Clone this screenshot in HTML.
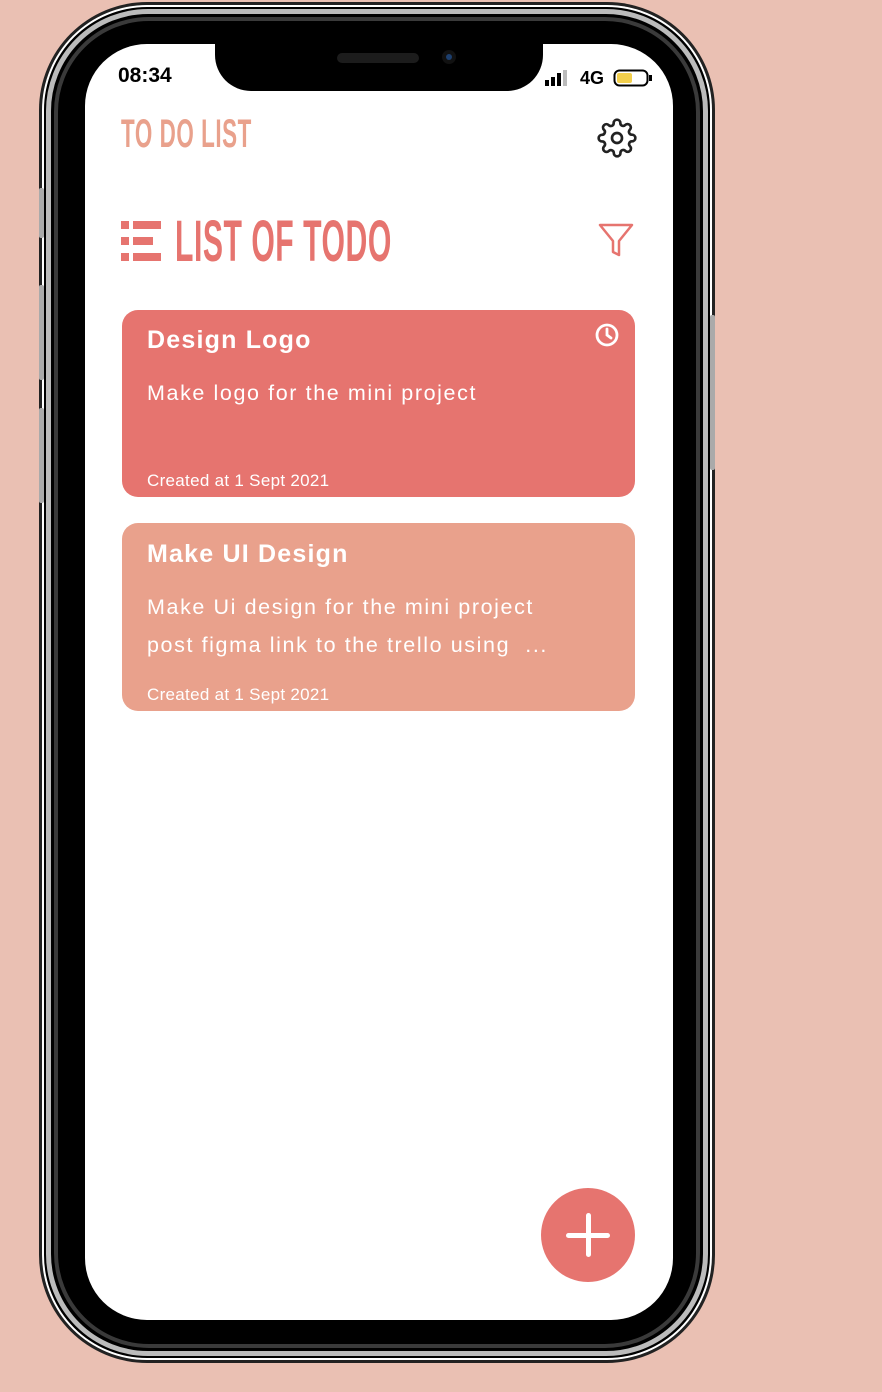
<!DOCTYPE html>
<html><head><meta charset="utf-8"><style>
body{margin:0;width:882px;height:1392px;background:#eac0b3;position:relative;overflow:hidden;font-family:"Liberation Sans",sans-serif}
.abs{position:absolute}
.phone{left:42px;top:5px;width:670px;height:1355px;border-radius:105px;background:#000;box-shadow:0 0 0 2px #fff inset,0 0 0 3px #222;}
.ring{left:46px;top:9px;width:662px;height:1347px;border-radius:102px;border:5px solid #bbb;box-sizing:border-box}
.ring2{left:54px;top:17px;width:646px;height:1331px;border-radius:95px;border:4px solid #3a3a3a;box-sizing:border-box}
.screen{left:85px;top:44px;width:588px;height:1276px;border-radius:62px;background:#fff;overflow:hidden}
.notch{left:215px;top:40px;width:328px;height:51px;background:#000;border-radius:0 0 36px 36px}
.narrow{font-family:"Liberation Sans Narrow","Liberation Sans",sans-serif;font-weight:bold;transform-origin:left top;white-space:nowrap}
.card{left:122px;width:513px;border-radius:16px;color:#fff}
.t{position:absolute;left:25px;font-weight:bold;font-size:25px;letter-spacing:1.2px}
.b{position:absolute;left:25px;font-size:21.5px;letter-spacing:1.6px;white-space:nowrap}
.c{position:absolute;left:25px;font-size:17px;letter-spacing:.3px}
</style></head><body>
<div class="abs phone"></div>
<div class="abs ring"></div>
<div class="abs ring2"></div>
<div class="abs" style="left:39px;top:188px;width:5px;height:50px;background:#aaa;border-radius:2px"></div>
<div class="abs" style="left:39px;top:285px;width:5px;height:95px;background:#aaa;border-radius:2px"></div>
<div class="abs" style="left:39px;top:408px;width:5px;height:95px;background:#aaa;border-radius:2px"></div>
<div class="abs" style="left:710px;top:315px;width:5px;height:155px;background:#aaa;border-radius:2px"></div>
<div class="abs screen"></div>
<div class="abs notch"></div>
<div class="abs" style="left:337px;top:53px;width:82px;height:10px;background:#1c1c1c;border-radius:5px"></div>
<div class="abs" style="left:442px;top:50px;width:14px;height:14px;background:#111;border-radius:50%"><div style="margin:4px;width:6px;height:6px;border-radius:50%;background:#1d3f6e"></div></div>
<div class="abs" style="left:118px;top:64px;font-size:21px;font-weight:bold;color:#000">08:34</div>
<svg class="abs" style="left:545px;top:70px" width="28" height="17"><rect x="0" y="10" width="4" height="6" fill="#000"/><rect x="6" y="7" width="4" height="9" fill="#000"/><rect x="12" y="3" width="4" height="13" fill="#000"/><rect x="18" y="0" width="4" height="16" fill="#bbb"/></svg>
<div class="abs" style="left:580px;top:68px;font-size:18px;font-weight:bold">4G</div>
<svg class="abs" style="left:613px;top:68px" width="42" height="20"><rect x="1.5" y="2.5" width="33" height="15" rx="5" fill="none" stroke="#000" stroke-width="2"/><rect x="4" y="5" width="15" height="10" rx="2" fill="#f2cf4c"/><rect x="36" y="7" width="3" height="6" fill="#000"/></svg>
<div class="abs narrow" style="left:121px;top:112px;font-size:40px;color:#e9a18c;transform:scaleX(.56);letter-spacing:1px">TO DO LIST</div>
<svg class="abs" style="left:597px;top:118px" width="40" height="40" viewBox="0 0 24 24" fill="none" stroke="#222" stroke-width="1.6" stroke-linejoin="round"><circle cx="12" cy="12" r="3"/><path d="M19.4 15a1.65 1.65 0 0 0 .33 1.82l.06.06a2 2 0 1 1-2.83 2.830l-.06-.06a1.650 1.650 0 0 0-1.82-.33 1.65 1.65 0 0 0-1 1.51V21a2 2 0 1 1-4 0v-.09A1.65 1.65 0 0 0 9 19.4a1.65 1.65 0 0 0-1.82.33l-.06.06a2 2 0 1 1-2.83-2.83l.06-.06a1.65 1.65 0 0 0 .33-1.82 1.65 1.65 0 0 0-1.51-1H3a2 2 0 1 1 0-4h.09A1.65 1.65 0 0 0 4.6 9a1.65 1.65 0 0 0-.33-1.82l-.06-.06a2 2 0 1 1 2.83-2.83l.06.06a1.65 1.65 0 0 0 1.82.33H9a1.65 1.65 0 0 0 1-1.51V3a2 2 0 1 1 4 0v.09a1.65 1.65 0 0 0 1 1.51 1.65 1.65 0 0 0 1.82-.33l.06-.06a2 2 0 1 1 2.83 2.83l-.06.06a1.65 1.65 0 0 0-.33 1.82V9a1.65 1.65 0 0 0 1.510 1H21a2 2 0 1 1 0 4h-.09a1.65 1.65 0 0 0-1.51 1z"/></svg>
<svg class="abs" style="left:121px;top:221px" width="40" height="40"><g fill="#e6746f"><rect x="0" y="0" width="8" height="8"/><rect x="12" y="0" width="28" height="8"/><rect x="0" y="16" width="8" height="8"/><rect x="12" y="16" width="20" height="8"/><rect x="0" y="32" width="8" height="8"/><rect x="12" y="32" width="28" height="8"/></g></svg>
<div class="abs narrow" style="left:175px;top:208px;font-size:58px;color:#e6746f;transform:scaleX(.52);letter-spacing:1px">LIST OF TODO</div>
<svg class="abs" style="left:597px;top:222px" width="38" height="36" viewBox="0 0 38 36"><path d="M3 3H35L22 19V33L16 30V19Z" fill="none" stroke="#e6746f" stroke-width="2.5" stroke-linejoin="round"/></svg>
<div class="abs card" style="top:310px;height:187px;background:#e6746f">
<div class="t" style="top:16px">Design Logo</div>
<svg style="position:absolute;left:473px;top:13px" width="24" height="24"><circle cx="12" cy="12" r="10" fill="none" stroke="#fff" stroke-width="2.8"/><path d="M12 6V12L16 15" fill="none" stroke="#fff" stroke-width="2.8" stroke-linecap="round"/></svg>
<div class="b" style="top:71px">Make logo for the mini project</div>
<div class="c" style="top:161px">Created at 1 Sept 2021</div>
</div>
<div class="abs card" style="top:523px;height:188px;background:#e9a18c">
<div class="t" style="top:17px">Make UI Design</div>
<div class="b" style="top:72px">Make Ui design for the mini project</div>
<div class="b" style="top:110px">post figma link to the trello using &nbsp;...</div>
<div class="c" style="top:162px">Created at 1 Sept 2021</div>
</div>
<div class="abs" style="left:541px;top:1188px;width:94px;height:94px;border-radius:50%;background:#e6746f"></div>
<div class="abs" style="left:586px;top:1213px;width:5px;height:44px;background:#fff;border-radius:3px"></div>
<div class="abs" style="left:566px;top:1233px;width:44px;height:5px;background:#fff;border-radius:3px"></div>
</body></html>
